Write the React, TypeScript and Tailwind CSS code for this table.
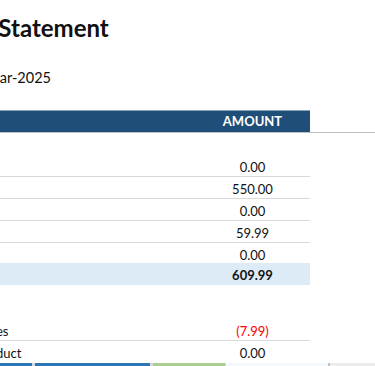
const rows = [
  { label: "Sales", amount: "0.00" },
  { label: "Services", amount: "550.00" },
  { label: "Rentals", amount: "0.00" },
  { label: "Interest", amount: "59.99" },
];

function Cell({ children, className = "" }: { children?: React.ReactNode; className?: string }) {
  return <div className={`h-full pt-[4px] leading-[17px] whitespace-nowrap ${className}`}>{children}</div>;
}

export default function App() {
  return (
    <main
      className="w-[375px] h-[366px] overflow-hidden bg-white text-[#111]"
      style={{ fontFamily: "Lato, 'Liberation Sans', sans-serif" }}
    >
      <div className="-ml-[100px] w-[475px]">
        <h1 className="pl-[14px] pt-[14px] text-[24px] leading-[28px] font-bold whitespace-nowrap">
          Income Statement
        </h1>
        <p className="pl-[12px] mt-[27px] text-[14.5px] leading-[17px] whitespace-nowrap">For Month: Mar-2025</p>

        {/* column header */}
        <div className="mt-[24px] grid grid-cols-[295px_115px_1fr] h-[23px] border-b border-[#bfbfbf] text-[13px]">
          <div className="bg-[#1f4e78] border-t border-[#8da2bb]" />
          <div className="bg-[#1f4e78] border-t border-[#8da2bb] text-center text-white font-bold leading-[21px]">
            AMOUNT
          </div>
          <div />
        </div>

        <div className="text-[13px]">
          <div className="grid grid-cols-[295px_115px_1fr] h-[22px]">
            <Cell className="pl-[20px] font-bold">Revenue</Cell>
          </div>
          {rows.map((r) => (
            <div key={r.label} className="grid grid-cols-[295px_115px_1fr] h-[22px]">
              <div className="col-span-2 grid grid-cols-[295px_115px] border-b border-[#d9d9d9]">
                <Cell className="pl-[30px]">{r.label}</Cell>
                <Cell className="text-center">{r.amount}</Cell>
              </div>
            </div>
          ))}
          <div className="grid grid-cols-[295px_115px_1fr] h-[20px]">
            <Cell className="pl-[30px]">Other</Cell>
            <Cell className="text-center">0.00</Cell>
          </div>
          <div className="grid grid-cols-[295px_115px_1fr] h-[22px] font-bold">
            <Cell className="pl-[20px] bg-[#ddebf7]">Total Sales</Cell>
            <Cell className="text-center bg-[#ddebf7]">609.99</Cell>
          </div>

          <div className="h-[12px]" />
          <div className="grid grid-cols-[295px_115px_1fr] h-[22px]">
            <Cell className="pl-[20px] font-bold">Costs</Cell>
          </div>
          <div className="grid grid-cols-[295px_115px_1fr] h-[22px]">
            <div className="col-span-2 grid grid-cols-[295px_115px] border-b border-[#d9d9d9]">
              <Cell className="pl-[30px]">Shipping Fees</Cell>
              <Cell className="text-center text-[#ff0000]">(7.99)</Cell>
            </div>
          </div>
          <div className="grid grid-cols-[295px_115px_1fr] h-[22px]">
            <Cell className="pl-[32px]">Cost of Product</Cell>
            <Cell className="text-center">0.00</Cell>
          </div>
        </div>

        {/* next table's colored header cells */}
        <div className="flex h-[20px]">
          <div className="w-[132px] bg-[#2e75b6]" />
          <div className="w-[3px] bg-[#d9d9d9]" />
          <div className="w-[115px] bg-[#2e75b6]" />
          <div className="w-[3px] bg-[#d9d9d9]" />
          <div className="w-[72px] bg-[#a9d08e]" />
          <div className="w-[1px] bg-[#d9d9d9]" />
          <div className="w-[102px] bg-[#f3f8fc]" />
          <div className="w-[2px] bg-[#bfbfbf]" />
          <div className="flex-1 bg-[#ececec]" />
        </div>
      </div>
    </main>
  );
}
